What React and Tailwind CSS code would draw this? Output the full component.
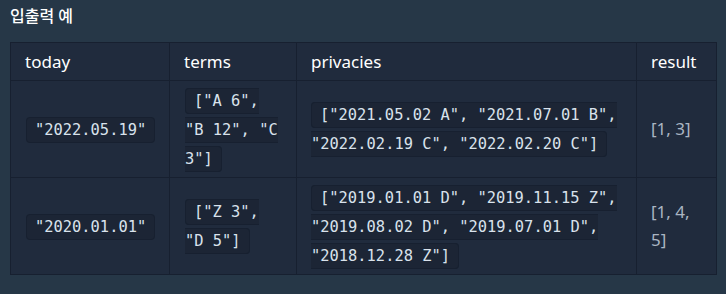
import React from 'react'

const rows = [
  {
    today: '"2022.05.19"',
    terms: '["A 6", "B 12", "C 3"]',
    privacies: '["2021.05.02 A", "2021.07.01 B", "2022.02.19 C", "2022.02.20 C"]',
    result: '[1, 3]',
  },
  {
    today: '"2020.01.01"',
    terms: '["Z 3", "D 5"]',
    privacies: '["2019.01.01 D", "2019.11.15 Z", "2019.08.02 D", "2019.07.01 D", "2018.12.28 Z"]',
    result: '[1, 4, 5]',
  },
]

function Code({ children }) {
  return (
    <code className="font-['DejaVu_Sans_Mono',monospace] text-[15.4px] text-[#d9e2ec] bg-[#1c2535] border border-[#172030] rounded-[4px] px-[8px] py-[3px]">
      {children}
    </code>
  )
}

export default function App() {
  return (
    <div className="w-[726px] h-[294px] bg-[#263747] font-['Noto_Sans','Noto_Sans_CJK_KR',sans-serif] px-[10px] pt-[3px]">
      <h5 className="text-white text-[16px] font-medium leading-[26px]">입출력 예</h5>
      <table className="mt-[13px] w-[706px] table-fixed border-collapse bg-[#202b3d] border border-[#172030]">
        <colgroup>
          <col className="w-[159px]" />
          <col className="w-[127px]" />
          <col className="w-[340px]" />
          <col className="w-[80px]" />
        </colgroup>
        <thead>
          <tr className="h-[38px]">
            {['today', 'terms', 'privacies', 'result'].map(h => (
              <th key={h} className="border border-[#172030] px-[14px] text-left font-normal text-[17px] text-white">{h}</th>
            ))}
          </tr>
        </thead>
        <tbody>
          {rows.map((r, i) => (
            <tr key={i} className="h-[97px]">
              <td className="border border-[#172030] px-[15px] align-middle leading-[28px]"><Code>{r.today}</Code></td>
              <td className="border border-[#172030] px-[15px] align-middle leading-[28px]"><Code>{r.terms}</Code></td>
              <td className="border border-[#172030] px-[14px] align-middle leading-[28px]"><Code>{r.privacies}</Code></td>
              <td className="border border-[#172030] px-[14px] align-middle leading-[28px] text-[17px] text-[#aab5c2]">{r.result}</td>
            </tr>
          ))}
        </tbody>
      </table>
    </div>
  )
}
